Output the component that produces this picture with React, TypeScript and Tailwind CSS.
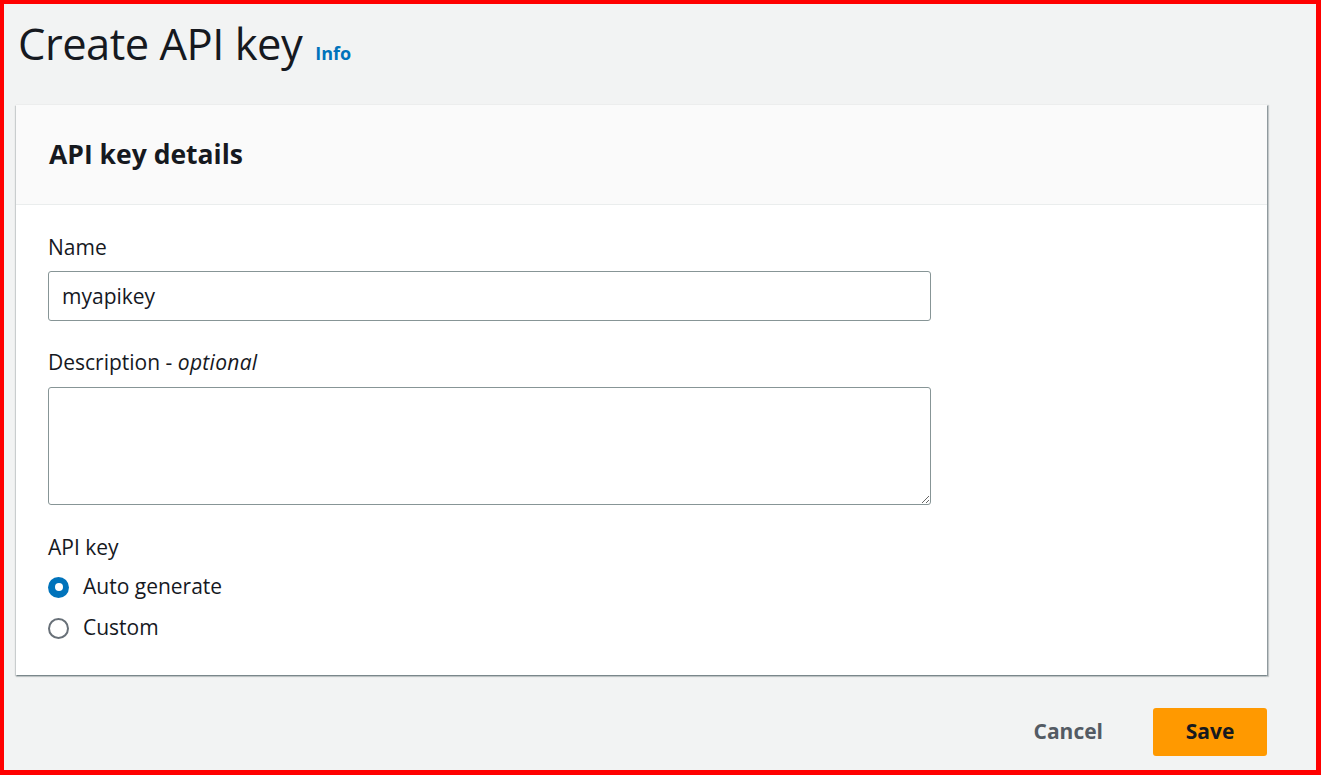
import { useState } from "react";

const App = () => {
  const [mode, setMode] = useState("auto");

  return (
    <div className="w-[1321px] h-[775px] bg-[#f2f3f3] border-t-4 border-l-4 border-r-[5px] border-b-[5px] border-[#ff0000] font-['Open_Sans',sans-serif] text-[#16191f] flex flex-col">
      {/* Page title */}
      <div className="h-[101px] pl-[14px] flex items-center gap-[13px]">
        <h1 className="text-[43.5px] leading-none font-normal tracking-[-0.5px] -mt-[22px]">Create API key</h1>
        <a className="text-[18px] font-bold text-[#0073bb] -mt-[3px]">Info</a>
      </div>

      {/* Card */}
      <div className="ml-[12px] mr-[49px] bg-white shadow-[1px_1px_1px_0_rgba(0,28,36,0.3),1px_1px_1px_1px_rgba(0,28,36,0.15),-1px_1px_1px_0_rgba(0,28,36,0.15)]">
        <div className="h-[100px] px-[33px] flex items-center bg-[#fafafa] border-b border-[#eaeded]">
          <h2 className="text-[26.5px] font-bold">API key details</h2>
        </div>
        <div className="px-[32px] pt-[28px] pb-[33px] text-[21px]">
          {/* Name */}
          <div className="h-[28px] leading-[28px] mb-[10px]">Name</div>
          <input
            defaultValue="myapikey"
            className="w-[883px] h-[50px] px-[13px] border border-[#879596] rounded-[3px] text-[21px] outline-none"
          />
          {/* Description */}
          <div className="h-[28px] leading-[28px] mt-[27px] mb-[11px]">
            Description - <i className="tracking-[0.3px]">optional</i>
          </div>
          <textarea className="block w-[883px] h-[118px] px-[13px] py-[8px] border border-[#879596] rounded-[3px] text-[21px] outline-none" />
          {/* API key */}
          <div className="h-[28px] leading-[28px] mt-[28px]">API key</div>
          <div className="flex flex-col gap-[13px] mt-[12px]">
            <label className="flex items-center gap-[14px] h-[28px]" onClick={() => setMode("auto")}>
              {mode === "auto" ? (
                <span className="w-[21px] h-[21px] rounded-full bg-[#0073bb] flex items-center justify-center">
                  <span className="w-[8px] h-[8px] rounded-full bg-white" />
                </span>
              ) : (
                <span className="w-[21px] h-[21px] rounded-full border-2 border-[#687078] bg-white" />
              )}
              Auto generate
            </label>
            <label className="flex items-center gap-[14px] h-[28px]" onClick={() => setMode("custom")}>
              {mode === "custom" ? (
                <span className="w-[21px] h-[21px] rounded-full bg-[#0073bb] flex items-center justify-center">
                  <span className="w-[8px] h-[8px] rounded-full bg-white" />
                </span>
              ) : (
                <span className="w-[21px] h-[21px] rounded-full border-2 border-[#687078] bg-white" />
              )}
              Custom
            </label>
          </div>
        </div>
      </div>

      {/* Actions */}
      <div className="mr-[49px] mt-[33px] flex justify-end items-center gap-[30px]">
        <button className="px-[20px] h-[48px] text-[21px] font-bold text-[#545b64]">Cancel</button>
        <button className="w-[114px] h-[48px] rounded-[3px] bg-[#ff9900] text-[21px] font-bold text-[#16191f]">Save</button>
      </div>
    </div>
  );
};

export default App;
